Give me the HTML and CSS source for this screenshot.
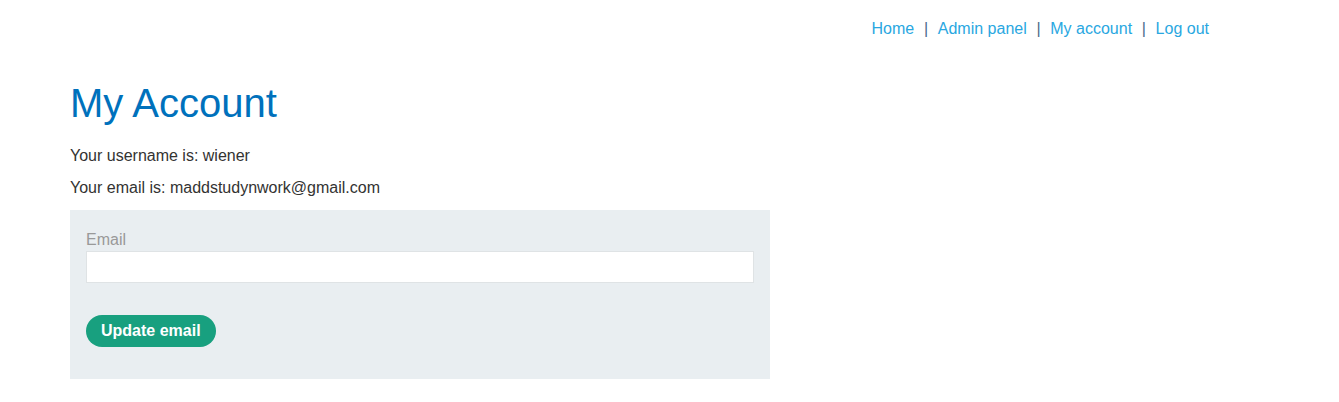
FILE: index.html
```html
<!DOCTYPE html>
<html lang="en">
<head>
<meta charset="utf-8">
<title>My Account</title>
<link rel="stylesheet" href="styles.css">
</head>
<body>
<header class="top">
  <nav class="nav">
    <a href="#" class="nav-link">Home</a><span class="sep">|</span><a href="#" class="nav-link">Admin panel</a><span class="sep">|</span><a href="#" class="nav-link">My account</a><span class="sep">|</span><a href="#" class="nav-link">Log out</a>
  </nav>
</header>
<main class="content">
  <h1 class="title">My Account</h1>
  <p class="info">Your username is: wiener</p>
  <p class="info">Your email is: maddstudynwork@gmail.com</p>
  <form class="panel">
    <label class="label" for="email">Email</label>
    <input class="field" id="email" type="email" name="email">
    <button class="btn" type="button">Update email</button>
  </form>
</main>
</body>
</html>
```

FILE: styles.css
```css
* { box-sizing: border-box; }
body {
  margin: 0;
  font-family: "Liberation Sans", Arial, sans-serif;
  font-size: 16px;
  color: #333332;
  background: #fff;
}
.top {
  display: flex;
  justify-content: flex-end;
  padding: 20px 130px 0 0;
}
.nav {
  display: flex;
  align-items: center;
  line-height: 18px;
}
.nav-link {
  color: #29a7e1;
  text-decoration: none;
}
.sep {
  color: #4a6a8a;
  margin: 0 9.7px;
}
.content {
  padding: 0 70px;
}
.title {
  margin: 42px 0 0;
  font-size: 40px;
  font-weight: normal;
  line-height: 46px;
  color: #0071bc;
}
.info {
  margin: 0;
  line-height: 32px;
}
.title + .info { margin-top: 14px; }
.panel {
  display: flex;
  flex-direction: column;
  align-items: flex-start;
  width: 700px;
  margin-top: 6px;
  padding: 20px 16px 32px;
  background: #e9eef1;
}
.label {
  color: #999;
  line-height: 20px;
}
.field {
  width: 100%;
  height: 32px;
  margin-top: 1px;
  border: 1px solid #dfe3e5;
  background: #fff;
  font: inherit;
}
.btn {
  margin-top: 32px;
  height: 32px;
  padding: 0 15px;
  border: 0;
  border-radius: 20px;
  background: #18a07f;
  color: #fff;
  font: bold 16px "Liberation Sans", Arial, sans-serif;
}
```
